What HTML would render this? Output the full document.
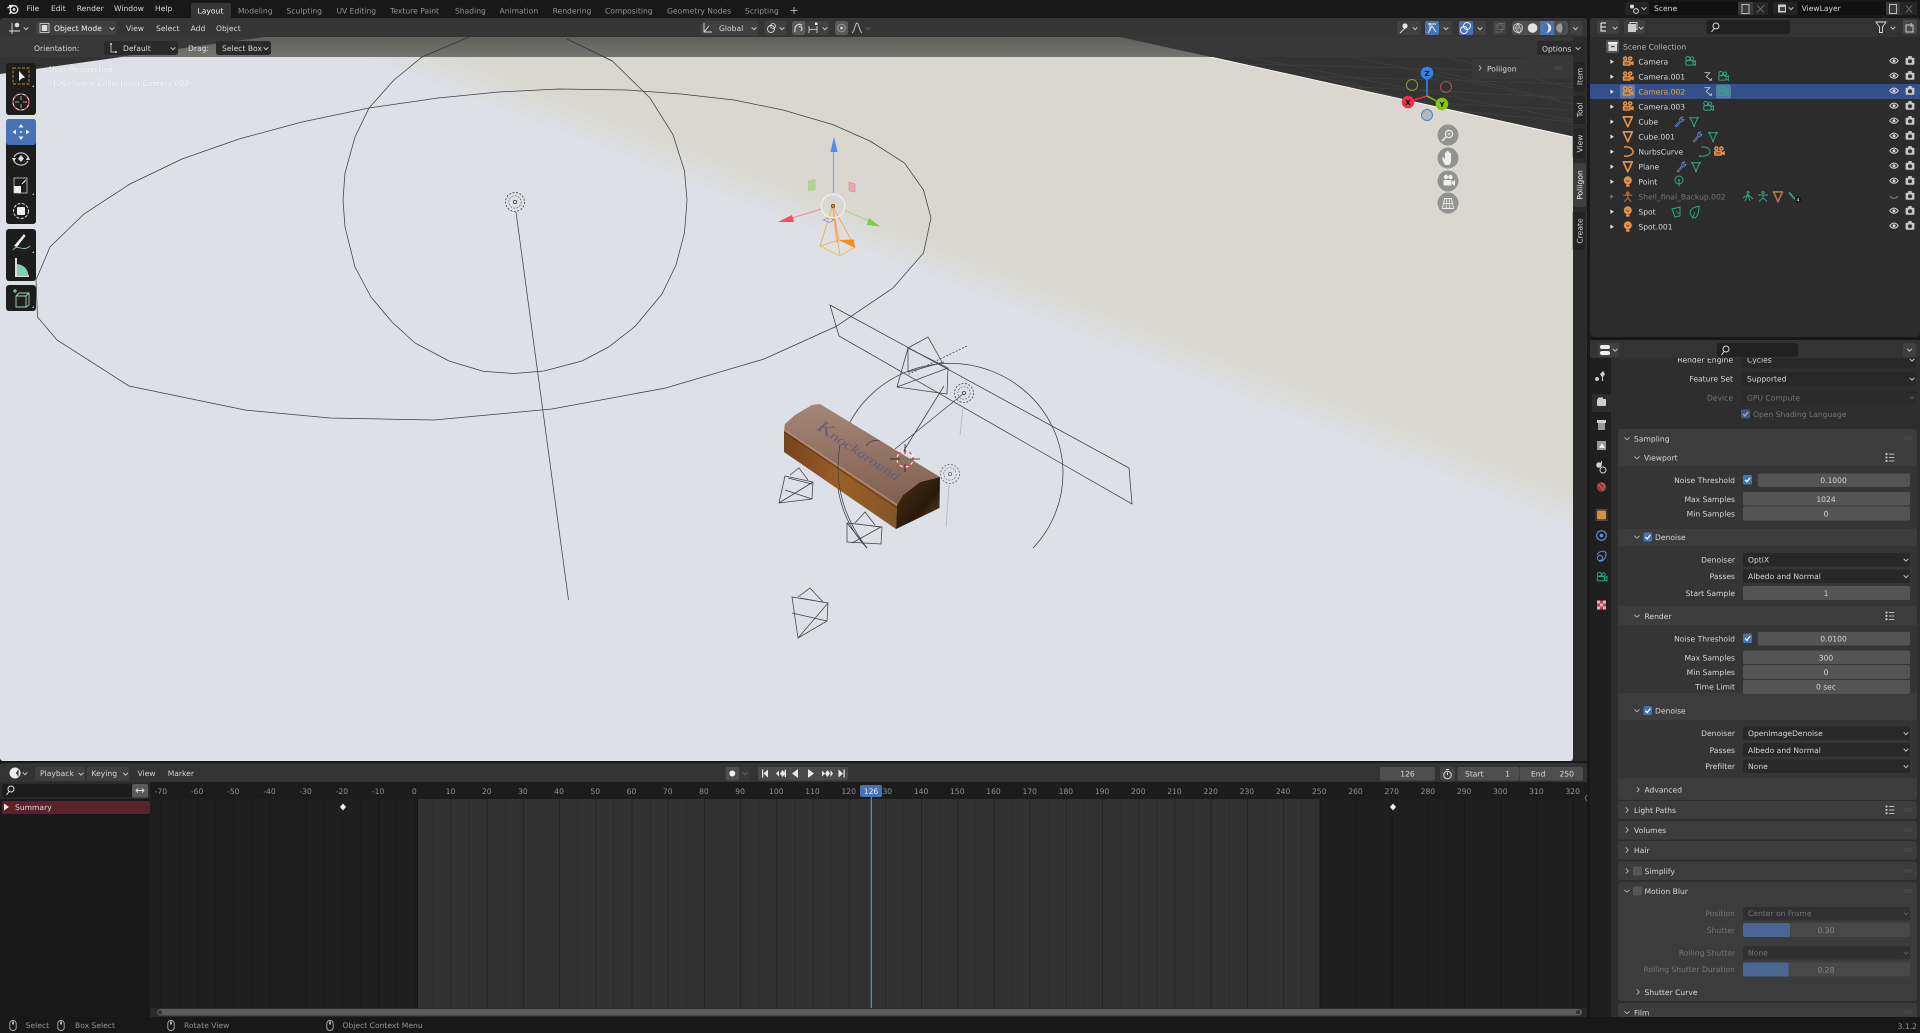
<!DOCTYPE html>
<html><head><meta charset="utf-8"><title>Blender</title>
<style>
html,body{margin:0;padding:0;background:#181818;width:1920px;height:1033px;overflow:hidden}
svg{display:block;filter:blur(.38px)}
text{font-family:"DejaVu Sans","Liberation Sans",sans-serif;font-size:7.6px;fill:#d6d6d6;text-rendering:geometricPrecision}
.r{text-anchor:end}.m{text-anchor:middle}
.d{fill:#929292}.l{fill:#747474}.w{fill:#f0f0f0}
.wi{fill:none;stroke:#3f3f3f;stroke-width:.75}
</style></head><body>
<svg xmlns="http://www.w3.org/2000/svg" width="1920" height="1033" viewBox="0 0 1920 1033">
<defs>
<path id="cd" d="M-2.3-1.2 0 1.2 2.3-1.2" fill="none" stroke="#c8c8c8" stroke-width="1"/>
<path id="cr" d="M-1.2-2.6 1.2 0-1.2 2.6" fill="none" stroke="#b8b8b8" stroke-width=".9"/>
<path id="cv" d="M-2.6-1.2 0 1.2 2.6-1.2" fill="none" stroke="#b8b8b8" stroke-width=".9"/>
<path id="ta" d="M-1.6-2.2 1.9 0-1.6 2.2Z" fill="#e2e2e2"/>
<path id="cnr" d="M2 0V2H0Z" fill="#bbb"/>
<g id="ocam"><circle cx="-2.6" cy="-3.2" r="2.3" fill="#e5914a"/><circle cx="2.4" cy="-3.2" r="2.3" fill="#e5914a"/><circle cx="-2.6" cy="-3.2" r=".8" fill="#5a3a20"/><circle cx="2.4" cy="-3.2" r=".8" fill="#5a3a20"/><rect x="-5" y="-1" width="8" height="5" rx="1" fill="#e5914a"/><rect x="-3.4" y=".2" width="5" height="2.6" fill="#5a3a20" opacity=".5"/><path d="M3 .4 5.800-.8V3.800L3 2.600Z" fill="#e5914a"/></g>
<path id="otri" d="M-4.5-4.800H4.500L0 5Z" fill="none" stroke="#e5914a" stroke-width="1.700" stroke-linejoin="round"/>
<g id="olamp"><circle cy="-1.400" r="4" fill="#e5914a"/><path d="M-1.400-1.800 0 0 1.400-1.800" fill="none" stroke="#6a4020" stroke-width=".7"/><rect x="-1.800" y="2.600" width="3.600" height="2.400" rx=".6" fill="#e5914a"/></g>
<g id="gcam" fill="none" stroke="#2fa588" stroke-width="1"><circle cx="-2.200" cy="-3.200" r="2"/><circle cx="2" cy="-3" r="1.700"/><rect x="-4.200" y="-1" width="7.200" height="4.400" rx="1"/><path d="M3 .4 5.400-1V3.600L3 2.400"/></g>
<g id="gtri"><path d="M-3.800-4H3.800L0 4.400Z" fill="none" stroke="#2fa588" stroke-width="1"/><circle cx="-3.800" cy="-4" r="1" fill="#2fa588"/><circle cx="3.800" cy="-4" r="1" fill="#2fa588"/><circle cy="4.400" r="1" fill="#2fa588"/></g>
<path id="wren" d="M-3.800 4.400 .8-.8C.2-2.800 1.400-4.800 3.800-4.800L2.200-2.800 3-1.600 5-2.600C5-.4 3.200-.6 1.600.2L-2.400 5.200Z" fill="none" stroke="#5a80c0" stroke-width=".9"/>
<path id="con" d="M-3.600-4H1.800L-1.800 0 3.200 3.600M1.400 3.600H3.400V1.600" fill="none" stroke="#c4c4c4" stroke-width=".9"/>
<g id="eye"><path d="M-4.200 0C-2-3.400 2-3.400 4.200 0 2 3.400-2 3.400-4.200 0Z" fill="none" stroke="#d5d5d5" stroke-width="1"/><circle r="1.500" fill="#d5d5d5"/></g>
<g id="rc"><rect x="-4.400" y="-3" width="8.800" height="7" rx="1" fill="#c8c8c8"/><rect x="-1.800" y="-4.600" width="3.600" height="2" fill="#c8c8c8"/><circle cy=".5" r="2" fill="#333"/></g>
<g id="list" fill="#d8d8d8"><rect x="-4.400" y="-4.400" width="1.800" height="1.800"/><rect x="-4.400" y="-1" width="1.800" height="1.800"/><rect x="-4.400" y="2.400" width="1.800" height="1.800"/><rect x="-1" y="-3.900" width="5.400" height=".8"/><rect x="-1" y="-.4" width="5.400" height=".8"/><rect x="-1" y="3" width="5.400" height=".8"/></g>
<g id="grip" fill="#5a5a5a"><rect x="-4" y="-1.400" width="8" height=".7"/><rect x="-4" y=".6" width="8" height=".7"/></g>
<g id="mouse"><rect x="-3.200" y="-5" width="6.400" height="10" rx="3" fill="none" stroke="#b0b0b0" stroke-width=".9"/><rect x="-1" y="-4" width="2" height="3" fill="#b0b0b0"/></g>
<path id="chk" d="M-2.400 0-.6 2 2.600-2" fill="none" stroke="#fff" stroke-width="1.300"/>
<g id="spot" fill="none" stroke="#3f3f3f"><circle r="9.500" stroke-width=".8" stroke-dasharray="2 1.500"/><circle r="6.200" stroke-width=".6" stroke-dasharray="1.800 1.400"/><circle r="1.600" stroke-width=".8"/></g>
<linearGradient id="plane" gradientUnits="userSpaceOnUse" x1="807" y1="190" x2="793" y2="226"><stop offset="0" stop-color="#d9d7cf"/><stop offset="1" stop-color="#dde0e6"/></linearGradient>
<linearGradient id="ov" x1="0" y1="0" x2="0" y2="1"><stop offset="0" stop-color="#5f5f5d"/><stop offset="1" stop-color="#747471"/></linearGradient>
<linearGradient id="top" x1="0" y1="0" x2="0" y2="1"><stop offset="0" stop-color="#a58676"/><stop offset="1" stop-color="#7f5f50"/></linearGradient>
<linearGradient id="front" x1="0" y1="0" x2="1" y2="0"><stop offset="0" stop-color="#74441c"/><stop offset=".5" stop-color="#9a5f26"/><stop offset="1" stop-color="#84552a"/></linearGradient>
<linearGradient id="end" x1="0" y1="0" x2="1" y2="1"><stop offset="0" stop-color="#4a2c10"/><stop offset=".6" stop-color="#2a1a0c"/><stop offset="1" stop-color="#6a4a24"/></linearGradient>
<pattern id="gr" x="414.3" y="0" width="36.2" height="10" patternUnits="userSpaceOnUse"><rect width="1" height="10" fill="#000" opacity=".25"/><rect x="18.1" width="1" height="10" fill="#000" opacity=".11"/></pattern>
<clipPath id="vp"><rect x="0" y="37" width="1573" height="724" rx="3"/></clipPath>
<clipPath id="pc"><rect x="1611" y="358" width="309" height="659"/></clipPath>
</defs>

<rect width="1920" height="1033" fill="#181818"/>

<!-- TOP BAR -->
<g fill="none" stroke="#eee" stroke-width="1.300"><circle cx="14" cy="9.500" r="3.800"/><path d="M9 5.500H13M7.500 8 11 6M9.500 14 11.500 11"/></g><circle cx="14" cy="9.500" r="1.400" fill="#eee"/>
<text x="26.500" y="11">File</text><text x="51" y="11">Edit</text><text x="76.700" y="11">Render</text><text x="114" y="11">Window</text><text x="155" y="11">Help</text>
<rect x="191" y="3" width="40" height="15" rx="2" fill="#353535"/>
<text x="197.500" y="13.700" class="w">Layout</text>
<text x="238" y="13.700" class="d">Modeling</text><text x="286.500" y="13.700" class="d">Sculpting</text><text x="336.500" y="13.700" class="d">UV Editing</text><text x="390" y="13.700" class="d">Texture Paint</text><text x="455" y="13.700" class="d">Shading</text><text x="499.500" y="13.700" class="d">Animation</text><text x="552.600" y="13.700" class="d">Rendering</text><text x="605" y="13.700" class="d">Compositing</text><text x="667" y="13.700" class="d">Geometry Nodes</text><text x="745" y="13.700" class="d">Scripting</text>
<path d="M794 7V14M790.500 10.500H797.500" stroke="#aaa" stroke-width="1"/>
<!-- scene selectors -->
<rect x="1625" y="2" width="24" height="13" rx="2" fill="#242424"/><rect x="1649" y="2" width="89" height="13" fill="#111"/><rect x="1738" y="2" width="15" height="13" fill="#3a3a3a"/><rect x="1753" y="2" width="15" height="13" fill="#262626"/>
<circle cx="1632" cy="6.500" r="2" fill="#ddd"/><circle cx="1636" cy="11" r="2.400" fill="none" stroke="#ddd"/><use href="#cd" x="1644" y="8.500"/>
<text x="1654" y="11">Scene</text>
<rect x="1742" y="4.500" width="7" height="9" fill="none" stroke="#bbb"/><path d="M1757 5.500 1764 12.500M1764 5.500 1757 12.500" stroke="#666"/>
<rect x="1773" y="2" width="25" height="13" rx="2" fill="#242424"/><rect x="1797.500" y="2" width="88.500" height="13" fill="#111"/><rect x="1886" y="2" width="14" height="13" fill="#3a3a3a"/><rect x="1900" y="2" width="17" height="13" fill="#262626"/>
<rect x="1778" y="4.500" width="8" height="8" fill="#ccc"/><rect x="1780" y="7" width="5" height="4" fill="#444"/><use href="#cd" x="1791" y="8.500"/>
<text x="1801.600" y="11">ViewLayer</text>
<rect x="1889.500" y="4.500" width="7" height="9" fill="none" stroke="#bbb"/><path d="M1906 5.500 1912 12.500M1912 5.500 1906 12.500" stroke="#666"/>

<!-- VIEWPORT AREA -->
<rect x="0" y="18" width="1587" height="743" rx="4" fill="#353535"/>
<g clip-path="url(#vp)">
<rect x="0" y="37" width="1573" height="724" fill="#333"/>
<g stroke="#414141" stroke-width=".7" fill="none">
<path d="M1120 48 1573 58M1160 62 1573 72M1230 74 1573 84M1300 84 1573 98M1380 100 1573 110M1450 110 1573 122M1200 48 1573 120M1300 46 1573 104M1400 46 1573 88M1490 46 1573 70M1560 100 1440 72M1480 122 1340 80M1520 130 1300 72"/>
</g>
<path d="M0 74 265 37H1120L1573 137V761H0Z" fill="url(#plane)"/>
<path d="M1120 37 1573 137" stroke="#fafafa" stroke-width=".9" fill="none"/>

<!-- wire objects -->
<path class="wi" d="M36 280 37.500 317 57 340 129 386 245 410 330 418 434 420 552 409 665.600 388 764 359 836 326.500 893 288 923.500 253 931 218 923.500 190 904.500 163 870 141 832.500 124.500 783 110 734 100 681 94 627.600 90 559 89 498.600 92 438 98 369 108 302 122 239 139 182 159 130 184 84 214 50 247Z"/>
<path class="wi" d="M469 37 422 57 394 80 369 108 355 137 345 173 343 200 345 227 355 267 371 297 392 322 415 343 449 361 483.500 371.400 514 373.500 544 371 582 361 608.600 347 635 326.500 662 294 676 265 684.500 232.600 687 200 684.500 171 673 134.700 650 98 612.400 61 567 39"/>
<use href="#spot" x="515" y="202"/>
<path class="wi" d="M516 212 568.500 600"/>
<path class="wi" d="M830 305 1129 468 1132 504 839 336Z"/>
<path class="wi" d="M867 548A113 110 0 1 1 1033 548"/>
<!-- top camera -->
<path class="wi" d="M908 348 948 368 947 394 897 387ZM908 348 928 337 942 362M908 348 897 387 947 394M897 387 948 368M908 348 908 372 944 362M912 350 942 365"/>
<path class="wi" stroke-dasharray="2 1.500" d="M967 346 907 375"/>
<!-- spots -->
<use href="#spot" x="964" y="393"/>
<use href="#spot" x="950" y="474" opacity=".75"/>
<path d="M963 407 960 435M949 485 946 527" stroke="#b5b5b5" stroke-width=".8" fill="none"/>

<!-- chocolate box -->
<path d="M784 430 784 452 896 529 897 505Z" fill="url(#front)"/>
<path d="M784 432 897 508" stroke="#5a3413" stroke-width=".8"/>
<path d="M897 505 903 495 920 482 940 477 939.500 508 896 529Z" fill="url(#end)"/>
<path d="M784 430 785 424 795 415 812 405 820 404 940 477 920 482 903 495 897 505Z" fill="url(#top)"/>
<path d="M784 430 897 505" stroke="#c09a82" stroke-width="1.600" opacity=".7"/>
<text transform="translate(816 429) rotate(33)" textLength="96" lengthAdjust="spacingAndGlyphs" opacity=".8" style="font-family:'Liberation Serif',serif;font-style:italic;font-size:13px;fill:#555a7e"><tspan style="font-size:18px">K</tspan>nockaround</text>
<!-- arcs over box -->
<path class="wi" d="M840 445C835 475 838 510 867 548M866 446C870 440 875 440 880 441M895 449 963 394M903 452 944 386"/>
<circle cx="905" cy="459" r="8" fill="none" stroke="#fff" stroke-width="1.100"/><circle cx="905" cy="459" r="8" fill="none" stroke="#d9323e" stroke-width="1.100" stroke-dasharray="3 3"/>
<path d="M890 459H900M910 459H920M905 444V454M905 464V472" stroke="#222" stroke-width=".8"/>
<!-- cameras -->
<path class="wi" d="M785 476 813 482 812 499 779 503ZM790 475 799 468 808 480M779 503 813 482M785 490 812 499M785 476 779 503M788 478 812 484"/>
<path class="wi" d="M847 523 882 527 881 544 847 542ZM855 523 865 512 875 525M852 543 881 527M847 523 867 548M857 524 880 527"/>
<path class="wi" d="M792 597 828 603 827 621 798 638ZM798 597 810 588 823 602M792 613 827 621M798 638 828 603M800 598 822 602"/>

<!-- transform gizmo -->
<path d="M833.500 193V152" stroke="#7da8f0" stroke-width="1.200"/><path d="M834 137 837.600 152H830.400Z" fill="#4f8cf0"/>
<path d="M821.600 209 792 218" stroke="#f08a96" stroke-width="1.100"/><path d="M778 222 792 215 794 222Z" fill="#f0505f"/>
<path d="M844 210 869 221" stroke="#a8d880" stroke-width="1.100"/><path d="M880 226.500 869 218 867 225Z" fill="#7fcf3f"/>
<path d="M808.500 181 815 179.500 815 189.500 808.500 191Z" fill="#a4d88a" stroke="#8fcf70" stroke-width=".6" opacity=".8"/>
<path d="M849 182 855 184 855 192 849 191Z" fill="#f0a0aa" stroke="#e8707c" stroke-width=".6" opacity=".8"/>
<path d="M829 217.500 834.500 220 829 222.500 823.500 220Z" fill="none" stroke="#8a9ae0" stroke-width=".9"/>
<path d="M832.500 206 820 246 840 256 855 247 839 240ZM832.500 206 840 256M832.500 206 855 247M832.500 206 837 243M820 246 839 240" fill="none" stroke="#f2a650" stroke-width=".8"/>
<path d="M820 246 840 256 855 247" fill="none" stroke="#f0d040" stroke-width=".9"/>
<path d="M839 240 854 239.500 855 248Z" fill="#f88d10"/>
<circle cx="833" cy="206" r="11.800" fill="none" stroke="#f5f5f5" stroke-width="1"/>
<circle cx="833" cy="206" r="1.800" fill="#f28a10" stroke="#333" stroke-width=".6"/>

<!-- overlay text -->
<text x="49" y="72" style="fill:#fafafa;stroke:#c4c4c4;stroke-width:.4;paint-order:stroke">User Perspective</text>
<text x="49" y="86" style="fill:#fafafa;stroke:#c4c4c4;stroke-width:.4;paint-order:stroke">(126) Scene Collection | Camera.002</text>

<!-- tool settings backdrop -->
<rect x="0" y="37" width="1573" height="20" fill="#383838"/>
<path d="M118 57 265 37H1120L1211 57Z" fill="url(#ov)"/>
<path d="M469 37 422 57M612.400 61 567 39" fill="none" stroke="#333" stroke-width=".7"/>
</g>
<rect x="0" y="18" width="1587" height="19" rx="3" fill="#353535"/>
<rect x="1573" y="37" width="14" height="724" fill="#2b2b2b"/>

<!-- 3D header -->
<g fill="none" stroke="#ddd" stroke-width=".9"><path d="M12 23V34M9 31H20"/></g><circle cx="17" cy="25" r="2.300" fill="#ddd"/>
<use href="#cd" x="26" y="28.500"/>
<rect x="36" y="21" width="80" height="14" rx="2.500" fill="#404040"/>
<rect x="40" y="23.500" width="9" height="9" fill="none" stroke="#ddd" stroke-width=".8"/><rect x="41.800" y="25" width="5.500" height="6" fill="#ddd"/>
<text x="54" y="31" class="w">Object Mode</text><use href="#cd" x="112" y="28.500"/>
<text x="126" y="31">View</text><text x="156" y="31">Select</text><text x="190.600" y="31">Add</text><text x="216" y="31">Object</text>
<!-- tool settings row -->
<text x="34" y="51">Orientation:</text>
<rect x="104" y="41" width="74" height="14" rx="2.500" fill="#2a2a2a"/>
<path d="M111 44V52H116" fill="none" stroke="#ddd" stroke-width=".8"/><circle cx="111" cy="44" r="1" fill="#ddd"/><circle cx="116" cy="52" r="1" fill="#ddd"/>
<text x="123" y="51">Default</text><use href="#cd" x="173" y="48.500"/>
<text x="188" y="51" style="fill:#ddd">Drag:</text>
<rect x="216" y="41" width="55" height="14" rx="2.500" fill="#2a2a2a"/><text x="222" y="51">Select Box</text><use href="#cd" x="266" y="48.500"/>

<rect x="700" y="21" width="58" height="14" rx="2.500" fill="#404040"/>
<path d="M704 23V32H712M704 32 709 26" fill="none" stroke="#ddd" stroke-width=".9"/>
<text x="719" y="31">Global</text><use href="#cd" x="754" y="28.500"/>
<rect x="764.500" y="21" width="21.500" height="14" rx="2.500" fill="#404040"/>
<circle cx="771" cy="29" r="3.500" fill="none" stroke="#ddd" stroke-width=".9"/><circle cx="773" cy="26" r="2.500" fill="none" stroke="#ddd" stroke-width=".8"/><use href="#cd" x="782" y="28.500"/>
<rect x="792" y="21" width="13.500" height="14" rx="2.500" fill="#5a5a5a"/>
<path d="M795 32C794 26 798 23 802 25M801 31C803 28 801 25 799 27" fill="none" stroke="#c8c8c8" stroke-width="1.300"/>
<rect x="806" y="21" width="23" height="14" rx="2.500" fill="#404040"/>
<path d="M809 26V33M817 26V33M809 29.500H817" stroke="#ddd" stroke-width=".8"/><rect x="815" y="22.500" width="2.500" height="2.500" fill="#eee"/><use href="#cd" x="825" y="28.500"/>
<rect x="835" y="21" width="13" height="14" rx="2.500" fill="#5a5a5a"/><circle cx="841.500" cy="28" r="3.800" fill="none" stroke="#999"/><circle cx="841.500" cy="28" r="1.300" fill="#ddd"/>
<path d="M852 33C855 31 855 23 857 23S859 31 862 33" fill="none" stroke="#ccc" stroke-width=".9"/><use href="#cd" x="868" y="28.500" opacity=".3"/>

<rect x="1397" y="21" width="24" height="14" rx="2.500" fill="#404040"/><circle cx="1405" cy="26" r="2.600" fill="#e5e5e5"/><path d="M1400 33 1405 28" stroke="#ddd"/><use href="#cd" x="1415" y="28.500"/>
<rect x="1425" y="21" width="14" height="14" rx="2" fill="#4772b3"/><path d="M1428 33 1432 26 1436 32M1428 24 1436 24M1430 23V31" fill="none" stroke="#eee" stroke-width=".9"/><rect x="1439" y="21" width="13" height="14" rx="2" fill="#404040"/><use href="#cd" x="1446" y="28.500"/>
<rect x="1459" y="21" width="14" height="14" rx="2" fill="#4772b3"/><circle cx="1467" cy="26" r="3.500" fill="none" stroke="#eee"/><circle cx="1464" cy="30" r="3.500" fill="none" stroke="#eee"/><rect x="1473" y="21" width="13" height="14" rx="2" fill="#404040"/><use href="#cd" x="1480" y="28.500"/>
<rect x="1493" y="21" width="13" height="14" rx="2" fill="#404040"/><rect x="1496" y="25" width="6" height="7" fill="none" stroke="#666"/><rect x="1498" y="23.500" width="6" height="6" fill="none" stroke="#666"/>
<rect x="1512" y="21" width="56" height="14" rx="3" fill="#4f4f4f"/>
<rect x="1540" y="21" width="14" height="14" fill="#4772b3"/>
<circle cx="1518" cy="28" r="4.500" fill="none" stroke="#ddd" stroke-width=".8"/><path d="M1513.500 28H1522.500M1518 23.500V32.500M1518 23.500C1515 27 1515 29 1518 32.500S1521 27 1518 23.500" fill="none" stroke="#ddd" stroke-width=".6"/>
<circle cx="1532.600" cy="28" r="4.800" fill="#e2e2e2"/>
<circle cx="1546.500" cy="28" r="4.800" fill="#e8e8e8"/><path d="M1546.500 23.200A4.800 4.800 0 0 0 1546.500 32.800C1549 30 1549 26 1546.500 23.200" fill="#4772b3"/>
<circle cx="1561" cy="28" r="4.800" fill="#999"/><path d="M1561 23.200A4.800 4.800 0 0 1 1561 32.800C1563 30 1563 26 1561 23.200" fill="#444"/>
<rect x="1570" y="21" width="12" height="14" rx="2" fill="#404040"/><use href="#cd" x="1575.500" y="28.500"/>
<rect x="1537" y="41" width="46" height="14" rx="2.500" fill="#2a2a2a"/><text x="1542" y="51.500">Options</text><use href="#cd" x="1578" y="48.500"/>

<!-- poliigon panel -->
<rect x="1472" y="59" width="101" height="20" rx="2" fill="#383838" opacity=".9"/>
<use href="#cr" x="1480" y="68"/><text x="1487" y="71.500">Poliigon</text><use href="#grip" x="1558" y="68"/>

<!-- sidebar tabs -->
<g fill="#242424" stroke="#3c3c3c" stroke-width=".6"><rect x="1573" y="61" width="13" height="31" rx="2"/><rect x="1573" y="95" width="13" height="30" rx="2"/><rect x="1573" y="128" width="13" height="31" rx="2"/><rect x="1573" y="211" width="13" height="40" rx="2"/></g>
<rect x="1573" y="163" width="13" height="44" rx="2" fill="#3f3f3f"/>
<text transform="translate(1582.500 76.500) rotate(-90)" class="m">Item</text><text transform="translate(1582.500 110) rotate(-90)" class="m">Tool</text><text transform="translate(1582.500 143.500) rotate(-90)" class="m">View</text><text transform="translate(1582.500 185) rotate(-90)" class="m w">Poliigon</text><text transform="translate(1582.500 231) rotate(-90)" class="m">Create</text>

<!-- nav gizmo -->
<g stroke-width="1.500"><path d="M1427 96V73" stroke="#3f86d8"/><path d="M1427 96 1408 102" stroke="#e8304a"/><path d="M1427 96 1442 104" stroke="#80c818"/></g>
<circle cx="1412" cy="85" r="5.500" fill="none" stroke="#7d9a3a" stroke-width="1"/>
<circle cx="1446" cy="87" r="5.500" fill="none" stroke="#a85058" stroke-width="1"/>
<circle cx="1427" cy="115" r="5.500" fill="#b3b8c0" stroke="#4f80c8" stroke-width="1"/>
<circle cx="1427" cy="73" r="6.300" fill="#2f83e5"/><circle cx="1408" cy="102" r="6.300" fill="#e8304a"/><circle cx="1442" cy="104" r="6.300" fill="#80c818"/>
<text x="1427" y="76" class="m" style="fill:#111;font-weight:bold;font-size:7px">Z</text><text x="1408" y="105" class="m" style="fill:#111;font-weight:bold;font-size:7px">X</text><text x="1442" y="107" class="m" style="fill:#111;font-weight:bold;font-size:7px">Y</text>
<g fill="#92928f"><circle cx="1448" cy="135" r="10.500"/><circle cx="1448" cy="158" r="10.500"/><circle cx="1448" cy="181" r="10.500"/><circle cx="1448" cy="203" r="10.500"/></g>
<circle cx="1449" cy="134" r="3.600" fill="none" stroke="#eee" stroke-width="1.200"/><path d="M1446 137 1442 141" stroke="#eee" stroke-width="1.500"/><path d="M1447.500 134H1450.500M1449 132.500V135.500" stroke="#eee" stroke-width=".7"/>
<path d="M1445 165C1443 161 1441 158 1443 157L1445 159V152.500L1446.500 152.500V157V151L1448 151V157V151.500L1449.500 151.500V157V153H1451V160C1451 163 1450 165 1449 165Z" fill="#eee"/>
<circle cx="1446" cy="177" r="2.200" fill="#eee"/><circle cx="1450.500" cy="177" r="2.200" fill="#eee"/><rect x="1443.500" y="180" width="8" height="5.500" rx="1" fill="#eee"/><path d="M1452 182 1455 180V186L1452 184Z" fill="#eee"/>
<path d="M1442.500 208.500 1444.500 198.500H1451.500L1453.500 208.500ZM1443.500 203.500H1452.500M1446.800 198.500 1446.200 208.500M1449.200 198.500 1449.800 208.500" fill="none" stroke="#eee" stroke-width=".9"/>

<!-- left toolbar -->
<g fill="#1d1d1d"><rect x="6" y="63" width="30" height="52" rx="3"/><rect x="6" y="119" width="30" height="105" rx="3"/><rect x="6" y="229" width="30" height="52" rx="3"/><rect x="6" y="285" width="30" height="26" rx="3"/></g>
<rect x="6" y="119" width="30" height="26" rx="3" fill="#4772b3"/>
<rect x="13" y="68" width="16" height="16" fill="none" stroke="#c89030" stroke-width=".9" stroke-dasharray="3 1.500"/><path d="M19 71V81L21.500 78.500 25 77.500Z" fill="#eee"/>
<circle cx="21" cy="102" r="8" fill="none" stroke="#eee" stroke-width="1.100"/><circle cx="21" cy="102" r="8" fill="none" stroke="#d05060" stroke-width="1.100" stroke-dasharray="3 3"/><path d="M21 96V100M21 104V108M15 102H19M23 102H27" stroke="#ccc" stroke-width=".8"/>
<g fill="#eee"><path d="M21 124 23.500 127.500H18.500ZM21 140 23.500 136.500H18.500ZM12.500 132 16 129.500V134.500ZM29.500 132 26 129.500V134.500Z"/><circle cx="21" cy="132" r="1"/></g>
<path d="M14 157A8 8 0 0 1 28 157M14 161A8 8 0 0 0 28 161" fill="none" stroke="#ddd" stroke-width="1"/><path d="M21 155 24 158.600 21 162 18 158.600ZM12 158 16 158 14 162ZM30 160 26 160 28 156Z" fill="#ddd"/>
<rect x="14" y="186" width="7" height="7" fill="#eee"/><rect x="14" y="178" width="13" height="15" fill="none" stroke="#ccc" stroke-width=".8"/><path d="M22 184 26 180" stroke="#eee"/>
<circle cx="21" cy="211" r="7.500" fill="none" stroke="#ddd" stroke-width="1" stroke-dasharray="3 1.500"/><rect x="17" y="207" width="8" height="8" fill="#eee" rx="1"/>
<path d="M14 246 24 234 25.500 236 17 247Z" fill="#eee"/><path d="M13 250C18 243 22 253 30 246" fill="none" stroke="#7fc8a0" stroke-width="1"/>
<path d="M16 258V276H29" fill="none" stroke="#ddd" stroke-width="2"/><path d="M17 264C25 265 28 270 28.500 276H17Z" fill="#7fd0b0"/>
<path d="M13 291H17M15 289V293" stroke="#7fd0a0" stroke-width="1.200"/><path d="M16 296 19 293H29V305L26 307H16ZM16 296H26V307M26 296 29 293" fill="none" stroke="#9fd8b8" stroke-width=".9"/>
<use href="#cnr" x="32" y="85"/><use href="#cnr" x="32" y="193"/><use href="#cnr" x="32" y="251"/><use href="#cnr" x="32" y="306"/>

<!-- OUTLINER -->
<rect x="1590" y="18" width="330" height="319" rx="4" fill="#2c2c2c"/>
<rect x="1590" y="18" width="330" height="19" rx="3" fill="#333"/>
<rect x="1597" y="20" width="22" height="14" rx="2.500" fill="#404040"/><path d="M1601 23H1606M1601 23V31H1606M1601 27H1606" fill="none" stroke="#ddd" stroke-width="1.200"/><use href="#cd" x="1615" y="28"/>
<rect x="1624" y="20" width="21" height="14" rx="2.500" fill="#404040"/><rect x="1628" y="24" width="8" height="8" fill="#ccc"/><rect x="1630" y="22.500" width="7" height="7" fill="none" stroke="#ccc"/><use href="#cd" x="1641" y="28"/>
<rect x="1706.500" y="20" width="83.500" height="14" rx="2.500" fill="#212121"/><circle cx="1716" cy="26" r="3" fill="none" stroke="#ddd"/><path d="M1714 28.500 1711.500 32" stroke="#ddd"/>
<path d="M1876 22H1886L1882.500 27V32.500H1879.500V27Z" fill="none" stroke="#ddd" stroke-width=".9"/><use href="#cd" x="1893" y="28"/>
<rect x="1903" y="20" width="14" height="14" rx="2" fill="#4a4a4a"/><rect x="1906" y="25" width="7" height="7" fill="none" stroke="#ccc"/><path d="M1911 23V27M1909 25H1913" stroke="#ccc"/>

<rect x="1606" y="40" width="13" height="13" rx="2" fill="#555"/><rect x="1608.500" y="43" width="8.500" height="8" fill="#d5d5d5"/><rect x="1608" y="42" width="9.500" height="2" fill="#eee"/><rect x="1611" y="46" width="3.500" height="1.200" fill="#444"/>
<text x="1623" y="49.500" style="fill:#b5b5b5">Scene Collection</text>

<rect x="1590" y="84" width="330" height="15" fill="#33508a"/>
<rect x="1620" y="84.500" width="15" height="14" rx="2" fill="#5c76a5"/><rect x="1716" y="84.500" width="15" height="14" rx="2" fill="#5c76a5"/>

<use href="#ta" x="1612" y="61.700"/><use href="#ta" x="1612" y="76.700"/><use href="#ta" x="1612" y="91.700"/><use href="#ta" x="1612" y="106.700"/><use href="#ta" x="1612" y="121.700"/><use href="#ta" x="1612" y="136.700"/><use href="#ta" x="1612" y="151.700"/><use href="#ta" x="1612" y="166.700"/><use href="#ta" x="1612" y="181.700"/><use href="#ta" x="1612" y="196.700" opacity=".4"/><use href="#ta" x="1612" y="211.700"/><use href="#ta" x="1612" y="226.700"/>
<use href="#ocam" x="1627.800" y="61.700"/><use href="#ocam" x="1627.800" y="76.700"/><use href="#ocam" x="1627.800" y="91.700"/><use href="#ocam" x="1627.800" y="106.700"/>
<use href="#otri" x="1627.800" y="121.700"/><use href="#otri" x="1627.800" y="136.700"/>
<path d="M1624 147C1631 146 1633 150 1633 152S1630 157 1624 156" fill="none" stroke="#e5914a" stroke-width="1.500"/>
<use href="#otri" x="1627.800" y="166.700"/><use href="#olamp" x="1627.800" y="181.700"/>
<g transform="translate(1627.800 196.700)" fill="none" stroke="#a8693a" stroke-width="1.200"><circle cy="-3.600" r="1.200" fill="#a8693a"/><path d="M-4.500-1.600H4.500M0-2V1.500M0 1.500-3.500 5M0 1.500 3.500 5"/></g>
<use href="#olamp" x="1627.800" y="211.700"/><use href="#olamp" x="1627.800" y="226.700"/>
<text x="1638.400" y="64.700">Camera</text><text x="1638.400" y="79.700">Camera.001</text><text x="1638.400" y="94.700" style="fill:#f3a63c">Camera.002</text><text x="1638.400" y="109.700">Camera.003</text><text x="1638.400" y="124.700">Cube</text><text x="1638.400" y="139.700">Cube.001</text><text x="1638.400" y="154.700">NurbsCurve</text><text x="1638.400" y="169.700">Plane</text><text x="1638.400" y="184.700">Point</text><text x="1638.400" y="199.700" class="l">Shell_final_Backup.002</text><text x="1638.400" y="214.700">Spot</text><text x="1638.400" y="229.700">Spot.001</text>

<use href="#gcam" x="1690" y="61.700"/>
<use href="#con" x="1708" y="76.700"/><use href="#gcam" x="1723" y="76.700"/>
<use href="#con" x="1708" y="91.700"/><use href="#gcam" x="1723" y="91.700"/>
<use href="#gcam" x="1708" y="106.700"/>
<use href="#wren" x="1679" y="121.700"/><use href="#gtri" x="1694" y="121.700"/>
<use href="#wren" x="1697" y="136.700"/><use href="#gtri" x="1713" y="136.700"/>
<path d="M1701 147C1708 146 1710 150 1710 152S1706 157 1700 156" fill="none" stroke="#2fa588" stroke-width="1"/><circle cx="1700" cy="156" r="1" fill="#2fa588"/><use href="#ocam" x="1719" y="151.700"/>
<use href="#wren" x="1681" y="166.700"/><use href="#gtri" x="1696" y="166.700"/>
<g fill="none" stroke="#2fa588" stroke-width="1"><circle cx="1679" cy="180" r="4"/><path d="M1679 180V186.500"/></g><circle cx="1679" cy="180" r="1" fill="#2fa588"/>
<g fill="none" stroke="#2fa588" stroke-width="1"><circle cx="1748" cy="192.500" r="1"/><path d="M1743 198 1748 194.500 1753 199M1748 194.500 1745 201M1748 194.500 1750 201"/><circle cx="1763" cy="192.500" r="1"/><path d="M1758 195H1768M1763 195V198L1759 201.500M1763 198 1767 201.500"/></g>
<use href="#otri" x="1778" y="196.700" opacity=".7"/>
<path d="M1789 192.500 1793 197 1796 200" stroke="#2fa588" stroke-width="1.700"/><circle cx="1798" cy="199.500" r="3" fill="#111"/><text x="1798" y="201.500" class="m" style="font-size:5px;fill:#eee">4</text>
<path d="M1672 209 1680 207 1680 216 1675 217Z" fill="none" stroke="#2fa588" stroke-width="1"/><path d="M1676 211 1679 214" stroke="#2fa588" stroke-width=".8"/>
<path d="M1690 212C1691 208 1695 207 1699 206 1699 212 1698 216 1695 218 1692 217 1690 215 1690 212Z" fill="none" stroke="#2fa588" stroke-width="1"/><path d="M1695 212 1692 219" stroke="#2fa588" stroke-width=".8"/>

<use href="#eye" x="1894" y="60.700"/><use href="#eye" x="1894" y="75.700"/><use href="#eye" x="1894" y="90.700"/><use href="#eye" x="1894" y="105.700"/><use href="#eye" x="1894" y="120.700"/><use href="#eye" x="1894" y="135.700"/><use href="#eye" x="1894" y="150.700"/><use href="#eye" x="1894" y="165.700"/><use href="#eye" x="1894" y="180.700"/><path d="M1890 196C1892 199 1896 199 1898 196" fill="none" stroke="#888"/><use href="#eye" x="1894" y="210.700"/><use href="#eye" x="1894" y="225.700"/>
<use href="#rc" x="1910" y="60.700"/><use href="#rc" x="1910" y="75.700"/><use href="#rc" x="1910" y="90.700"/><use href="#rc" x="1910" y="105.700"/><use href="#rc" x="1910" y="120.700"/><use href="#rc" x="1910" y="135.700"/><use href="#rc" x="1910" y="150.700"/><use href="#rc" x="1910" y="165.700"/><use href="#rc" x="1910" y="180.700"/><use href="#rc" x="1910" y="195.700"/><use href="#rc" x="1910" y="210.700"/><use href="#rc" x="1910" y="225.700"/>

<!-- PROPERTIES -->
<rect x="1590" y="340" width="330" height="677" fill="#2e2e2e"/>
<rect x="1590" y="358" width="21" height="659" fill="#1f1f1f"/>
<g clip-path="url(#pc)">
<rect x="1741" y="354" width="175" height="14" rx="2" fill="#282828"/>
<text x="1733" y="362.500" class="r">Render Engine</text><text x="1747" y="362.500">Cycles</text><use href="#cd" x="1912" y="360"/>
<text x="1733" y="381.500" class="r">Feature Set</text><rect x="1741" y="372" width="175" height="13.500" rx="2" fill="#282828"/><text x="1747" y="381.500">Supported</text><use href="#cd" x="1912" y="379"/>
<text x="1733" y="400.500" class="r l">Device</text><rect x="1741" y="391" width="175" height="13.500" rx="2" fill="#2b2b2b"/><text x="1747" y="400.500" class="l">GPU Compute</text><use href="#cd" x="1912" y="397.500" opacity=".3"/>
<rect x="1741" y="409.500" width="9" height="9" rx="1.500" fill="#415a80"/><use href="#chk" x="1745.500" y="414" opacity=".5"/><text x="1753" y="417" class="l">Open Shading Language</text>

<rect x="1618" y="429" width="299" height="371" rx="3" fill="#3c3c3c"/>
<rect x="1618" y="466" width="299" height="63" fill="#353535"/>
<rect x="1618" y="546" width="299" height="60" fill="#353535"/>
<rect x="1618" y="625" width="299" height="68" fill="#353535"/>
<rect x="1618" y="720" width="299" height="58" fill="#353535"/>

<use href="#cv" x="1627" y="438.600"/><text x="1634" y="441.600">Sampling</text><use href="#grip" x="1908" y="438"/>
<use href="#cv" x="1637" y="457.600"/><text x="1644" y="460.600">Viewport</text><use href="#list" x="1890" y="457.600"/>

<rect x="1743" y="475" width="9" height="9.500" rx="1.500" fill="#4772b3"/><use href="#chk" x="1747.500" y="479.800"/>
<text x="1735" y="483" class="r">Noise Threshold</text><rect x="1757.700" y="473.500" width="152.300" height="13.500" rx="2" fill="#545454"/><text x="1833.500" y="483" class="m">0.1000</text>
<text x="1735" y="502" class="r">Max Samples</text><rect x="1743" y="492" width="167" height="13.500" rx="2" fill="#545454"/><text x="1826" y="502" class="m">1024</text>
<text x="1735" y="516.500" class="r">Min Samples</text><rect x="1743" y="506.500" width="167" height="14" rx="2" fill="#545454"/><text x="1826" y="516.500" class="m">0</text>

<use href="#cv" x="1637" y="537"/><rect x="1643.500" y="532.500" width="8.500" height="9" rx="1.500" fill="#4772b3"/><use href="#chk" x="1647.700" y="537"/><text x="1655" y="540">Denoise</text>
<text x="1735" y="562.600" class="r">Denoiser</text><rect x="1743" y="553" width="167" height="13.500" rx="2" fill="#282828"/><text x="1748" y="562.600">OptiX</text><use href="#cd" x="1906" y="560"/>
<text x="1735" y="579" class="r">Passes</text><rect x="1743" y="569.500" width="167" height="13.500" rx="2" fill="#282828"/><text x="1748" y="579">Albedo and Normal</text><use href="#cd" x="1906" y="576.500"/>
<text x="1735" y="596" class="r">Start Sample</text><rect x="1743" y="586" width="167" height="14" rx="2" fill="#545454"/><text x="1826" y="596" class="m">1</text>

<use href="#cv" x="1637" y="616"/><text x="1644.500" y="619">Render</text><use href="#list" x="1890" y="616"/>
<rect x="1743" y="633.500" width="9" height="9.500" rx="1.500" fill="#4772b3"/><use href="#chk" x="1747.500" y="638.300"/>
<text x="1735" y="641.500" class="r">Noise Threshold</text><rect x="1757.700" y="632" width="152.300" height="13.500" rx="2" fill="#545454"/><text x="1833.500" y="641.500" class="m">0.0100</text>
<text x="1735" y="660.500" class="r">Max Samples</text><rect x="1743" y="650.500" width="167" height="13.500" rx="2" fill="#545454"/><text x="1826" y="660.500" class="m">300</text>
<text x="1735" y="675" class="r">Min Samples</text><rect x="1743" y="665" width="167" height="14" rx="2" fill="#545454"/><text x="1826" y="675" class="m">0</text>
<text x="1735" y="689.500" class="r">Time Limit</text><rect x="1743" y="680" width="167" height="14" rx="2" fill="#545454"/><text x="1826" y="689.500" class="m">0 sec</text>

<use href="#cv" x="1637" y="710.600"/><rect x="1643.500" y="706" width="8.500" height="9" rx="1.500" fill="#4772b3"/><use href="#chk" x="1647.700" y="710.600"/><text x="1655" y="713.600">Denoise</text>
<text x="1735" y="736" class="r">Denoiser</text><rect x="1743" y="726.500" width="167" height="13.500" rx="2" fill="#282828"/><text x="1748" y="736">OpenImageDenoise</text><use href="#cd" x="1906" y="733.500"/>
<text x="1735" y="753" class="r">Passes</text><rect x="1743" y="743" width="167" height="13.500" rx="2" fill="#282828"/><text x="1748" y="753">Albedo and Normal</text><use href="#cd" x="1906" y="750"/>
<text x="1735" y="769" class="r">Prefilter</text><rect x="1743" y="759.500" width="167" height="13.500" rx="2" fill="#282828"/><text x="1748" y="769">None</text><use href="#cd" x="1906" y="766.500"/>
<use href="#cr" x="1638" y="789.600"/><text x="1644.500" y="792.600">Advanced</text>

<rect x="1618" y="801" width="299" height="18" rx="3" fill="#3c3c3c"/><use href="#cr" x="1627" y="810"/><text x="1634" y="813">Light Paths</text><use href="#list" x="1890" y="810"/><use href="#grip" x="1908" y="810"/>
<rect x="1618" y="821" width="299" height="18.500" rx="3" fill="#3c3c3c"/><use href="#cr" x="1627" y="830"/><text x="1634" y="833">Volumes</text><use href="#grip" x="1908" y="830"/>
<rect x="1618" y="841" width="299" height="18.500" rx="3" fill="#3c3c3c"/><use href="#cr" x="1627" y="850"/><text x="1634" y="853">Hair</text><use href="#grip" x="1908" y="850"/>
<rect x="1618" y="861.500" width="299" height="18.500" rx="3" fill="#3c3c3c"/><use href="#cr" x="1627" y="871"/><rect x="1633" y="866.500" width="9" height="9" rx="1.500" fill="#555"/><text x="1644.500" y="874">Simplify</text><use href="#grip" x="1908" y="871"/>

<rect x="1618" y="882" width="299" height="119" rx="3" fill="#3c3c3c"/>
<use href="#cv" x="1627" y="891"/><rect x="1633" y="886.500" width="9" height="9" rx="1.500" fill="#555"/><text x="1644.500" y="894">Motion Blur</text><use href="#grip" x="1908" y="891"/>
<text x="1735" y="916" class="r l">Position</text><rect x="1743" y="907" width="167" height="13.500" rx="2" fill="#303030"/><text x="1748" y="916" class="l">Center on Frame</text><use href="#cd" x="1906" y="913.500" opacity=".3"/>
<text x="1735" y="933" class="r l">Shutter</text><rect x="1743" y="923" width="167" height="14" rx="2" fill="#484848"/><rect x="1743" y="923" width="47" height="14" rx="2" fill="#4a6694"/><text x="1826" y="933" class="m" style="fill:#888">0.30</text>
<text x="1735" y="955.600" class="r l">Rolling Shutter</text><rect x="1743" y="946" width="167" height="13.500" rx="2" fill="#303030"/><text x="1748" y="955.600" class="l">None</text><use href="#cd" x="1906" y="953" opacity=".3"/>
<text x="1735" y="972" class="r l">Rolling Shutter Duration</text><rect x="1743" y="962.500" width="167" height="14" rx="2" fill="#484848"/><rect x="1743" y="962.500" width="45.600" height="14" rx="2" fill="#4a6694"/><text x="1826" y="972.300" class="m" style="fill:#888">0.28</text>
<use href="#cr" x="1638" y="992"/><text x="1644.500" y="995">Shutter Curve</text>
<rect x="1618" y="1003" width="299" height="20" rx="3" fill="#3c3c3c"/><use href="#cv" x="1627" y="1012.500"/><text x="1634" y="1015.500">Film</text><use href="#grip" x="1908" y="1012"/>
</g>

<!-- props header -->
<rect x="1590" y="340" width="330" height="18" rx="3" fill="#333"/>
<rect x="1598" y="343" width="21" height="14" rx="2" fill="#404040"/>
<rect x="1600" y="345" width="10" height="4" rx="2" fill="#eee"/><rect x="1600" y="351" width="10" height="4" rx="2" fill="#eee"/><use href="#cd" x="1615" y="350"/>
<rect x="1717" y="343" width="81" height="14" rx="2.500" fill="#212121"/><circle cx="1726" cy="349" r="3" fill="none" stroke="#ddd"/><path d="M1724 351.500 1721.500 355" stroke="#ddd"/>
<rect x="1903" y="343" width="13" height="14" rx="2" fill="#404040"/><use href="#cd" x="1909.500" y="350"/>

<!-- props tabs -->
<rect x="1592" y="394" width="19" height="18" rx="2" fill="#2e2e2e"/>
<g fill="#cfcfcf">
<path d="M1597 371V376M1597 377a2 2 0 1 0 .1 0M1603 371 1605 374 1603 377V381H1602V377L1600 374Z"/>
<rect x="1597" y="399" width="9" height="7" rx="1"/><rect x="1598" y="397.500" width="5" height="2"/>
<rect x="1597" y="420" width="9" height="3"/><rect x="1598" y="423" width="7" height="7" fill="#999"/>
<rect x="1597" y="441" width="9" height="9" fill="#999"/><path d="M1599 448 1602 443 1605 448Z" fill="#eee"/>
<circle cx="1599" cy="465" r="2.800"/><circle cx="1603" cy="470" r="3" fill="none" stroke="#cfcfcf"/><path d="M1601.500 461V464" stroke="#cfcfcf"/>
</g>
<circle cx="1601.500" cy="487" r="4.800" fill="#9a3636"/><path d="M1598 484.500C1601 486 1601 489 1604 490M1601 482.500C1604 484 1605 487 1604 488" stroke="#d08080" fill="none" stroke-width=".7"/>
<rect x="1597" y="510.500" width="9" height="9" rx="1" fill="#d98e3f"/><rect x="1596" y="509.500" width="11" height="11" fill="none" stroke="#666" stroke-width=".6"/>
<circle cx="1601.500" cy="535.500" r="4.800" fill="none" stroke="#5f8ed8" stroke-width="1.200"/><circle cx="1601.500" cy="535.500" r="1.800" fill="#5f8ed8"/>
<g fill="none" stroke="#5f8ed8" stroke-width="1.100"><circle cx="1600" cy="558" r="2.600"/><path d="M1597 555C1600 550 1606 550 1606 554S1603 562 1599 561"/></g>
<use href="#gcam" x="1601.500" y="577.500"/>
<rect x="1597" y="600.500" width="9" height="9" fill="#b8444c"/><g fill="#e8b0b0"><rect x="1597" y="600.500" width="3" height="3"/><rect x="1603" y="600.500" width="3" height="3"/><rect x="1600" y="603.500" width="3" height="3"/><rect x="1597" y="606.500" width="3" height="3"/><rect x="1603" y="606.500" width="3" height="3"/></g>

<!-- TIMELINE -->
<rect x="0" y="763" width="1587" height="254" rx="3" fill="#333"/>
<circle cx="15" cy="773" r="5.500" fill="#eee"/><path d="M16 773 18.500 769V777Z" fill="#333"/><use href="#cd" x="25" y="773.500"/>
<rect x="35" y="767" width="50" height="13.500" rx="2" fill="#404040"/><text x="40" y="776">Playback</text><use href="#cd" x="81" y="774"/>
<rect x="87" y="767" width="42" height="13.500" rx="2" fill="#404040"/><text x="91.500" y="776">Keying</text><use href="#cd" x="125.600" y="774"/>
<text x="137.500" y="776">View</text><text x="167.700" y="776">Marker</text>
<rect x="725.700" y="767" width="13.300" height="13.500" rx="2" fill="#4e4e4e"/><circle cx="732.300" cy="773.500" r="3" fill="#eee"/><rect x="739" y="767" width="11" height="13.500" fill="#383838"/><use href="#cd" x="745" y="773.500" opacity=".3"/>
<rect x="758" y="767" width="90" height="13.500" rx="2" fill="#4a4a4a"/>
<g fill="#e8e8e8">
<rect x="762" y="769.500" width="1.200" height="8"/><path d="M768 769.500 763.500 773.500 768 777.500Z"/>
<path d="M776 773.500 779 770.500V776.500ZM780 773.500 782.500 770 785 773.500 782.500 777ZM784.500 770.500 786 769.500V777.500L784.500 776.500"/>
<path d="M798 769 792 773.500 798 778Z"/><path d="M808 769 814 773.500 808 778Z"/>
<path d="M822 770.500 825 773.500 822 776.500ZM825 773.500 827.500 770 830 773.500 827.500 777ZM830.500 770 833 773.500 830.500 777Z"/>
<path d="M838.500 769.500 843 773.500 838.500 777.500Z"/><rect x="843.500" y="769.500" width="1.200" height="8"/>
</g>
<rect x="1380" y="767" width="55" height="13.500" rx="2" fill="#4e4e4e"/><text x="1407.500" y="776.500" class="m">126</text>
<rect x="1440" y="767" width="15" height="13.500" rx="2" fill="#444"/><circle cx="1447.500" cy="775" r="3.800" fill="none" stroke="#ddd"/><path d="M1447.500 772.500V775M1446 769.500H1449" stroke="#ddd"/>
<rect x="1457.500" y="767" width="62" height="13.500" rx="2" fill="#4e4e4e"/><rect x="1520" y="767" width="63" height="13.500" rx="2" fill="#4e4e4e"/>
<text x="1465" y="776.500">Start</text><text x="1510" y="776.500" class="r">1</text><text x="1531" y="776.500">End</text><text x="1574" y="776.500" class="r">250</text>

<!-- ruler -->
<rect x="0" y="782" width="1587" height="17" fill="#1c1c1c"/>
<rect x="0" y="782" width="150" height="17" fill="#2b2b2b"/>
<rect x="2" y="784" width="130" height="13.500" rx="2" fill="#1c1c1c"/><circle cx="11" cy="789" r="3" fill="none" stroke="#ddd"/><path d="M9 791.500 6.500 795" stroke="#ddd"/>
<rect x="132" y="784" width="16" height="13.500" rx="2" fill="#5a5a5a"/><path d="M136 790.500H144M138 788.500 136 790.500 138 792.500M142 788.500 144 790.500 142 792.500" fill="none" stroke="#ddd" stroke-width=".9"/>
<text x="160.900" y="794" class="m d">-70</text><text x="197.100" y="794" class="m d">-60</text><text x="233.300" y="794" class="m d">-50</text><text x="269.500" y="794" class="m d">-40</text><text x="305.700" y="794" class="m d">-30</text><text x="341.900" y="794" class="m d">-20</text><text x="378.100" y="794" class="m d">-10</text><text x="414.300" y="794" class="m d">0</text><text x="450.500" y="794" class="m d">10</text><text x="486.700" y="794" class="m d">20</text><text x="522.900" y="794" class="m d">30</text><text x="559.100" y="794" class="m d">40</text><text x="595.300" y="794" class="m d">50</text><text x="631.500" y="794" class="m d">60</text><text x="667.700" y="794" class="m d">70</text><text x="703.900" y="794" class="m d">80</text><text x="740.100" y="794" class="m d">90</text><text x="776.300" y="794" class="m d">100</text><text x="812.500" y="794" class="m d">110</text><text x="848.700" y="794" class="m d">120</text><text x="884.900" y="794" class="m d">130</text><text x="921.100" y="794" class="m d">140</text><text x="957.300" y="794" class="m d">150</text><text x="993.500" y="794" class="m d">160</text><text x="1029.700" y="794" class="m d">170</text><text x="1065.900" y="794" class="m d">180</text><text x="1102.100" y="794" class="m d">190</text><text x="1138.300" y="794" class="m d">200</text><text x="1174.500" y="794" class="m d">210</text><text x="1210.700" y="794" class="m d">220</text><text x="1246.900" y="794" class="m d">230</text><text x="1283.100" y="794" class="m d">240</text><text x="1319.300" y="794" class="m d">250</text><text x="1355.500" y="794" class="m d">260</text><text x="1391.700" y="794" class="m d">270</text><text x="1427.900" y="794" class="m d">280</text><text x="1464.100" y="794" class="m d">290</text><text x="1500.300" y="794" class="m d">300</text><text x="1536.500" y="794" class="m d">310</text><text x="1572.700" y="794" class="m d">320</text>
<!-- key area -->
<rect x="150" y="799" width="1437" height="218" fill="#1f1f1f"/>
<rect x="418" y="799" width="902" height="209" fill="#323232"/>
<rect x="150" y="799" width="1437" height="218" fill="url(#gr)"/>
<rect x="417" y="799" width="1" height="209" fill="#111"/>
<rect x="0" y="799" width="150" height="218" fill="#191919"/>
<rect x="2" y="801" width="148" height="13" rx="2" fill="#5a2329"/>
<path d="M4 803.500 9 807 4 810.500Z" fill="#e8e8e8"/><text x="15" y="810">Summary</text>
<path d="M343 803.500 346 807 343 810.500 340 807Z" fill="#eee"/><path d="M1393 803.500 1396 807 1393 810.500 1390 807Z" fill="#eee"/>
<rect x="150" y="1008" width="1437" height="9" fill="#2a2a2a"/>
<rect x="157" y="1009" width="1425" height="6.500" rx="3.200" fill="#5c5c5c"/><circle cx="160" cy="1012.300" r="2" fill="#333"/><circle cx="1578" cy="1012.300" r="2" fill="#333"/>
<rect x="870.700" y="797" width="1.300" height="211" fill="#4a86e8"/>
<rect x="860" y="785" width="22" height="12" rx="2" fill="#4772b3"/><text x="871" y="794" class="m w">126</text>
<path d="M1587 795 1585 798 1587 801" fill="none" stroke="#888" stroke-width=".7"/>

<!-- STATUS BAR -->
<rect x="0" y="1017" width="1920" height="16" fill="#181818"/>
<use href="#mouse" x="13" y="1025.500"/><text x="25.700" y="1028" class="d">Select</text>
<use href="#mouse" x="61" y="1025.500"/><text x="75" y="1028" class="d">Box Select</text>
<use href="#mouse" x="171" y="1025.500"/><text x="184" y="1028" class="d">Rotate View</text>
<use href="#mouse" x="330" y="1025.500"/><text x="342.500" y="1028" class="d">Object Context Menu</text>
<text x="1917" y="1029" class="r d">3.1.2</text>
</svg>
</body></html>
